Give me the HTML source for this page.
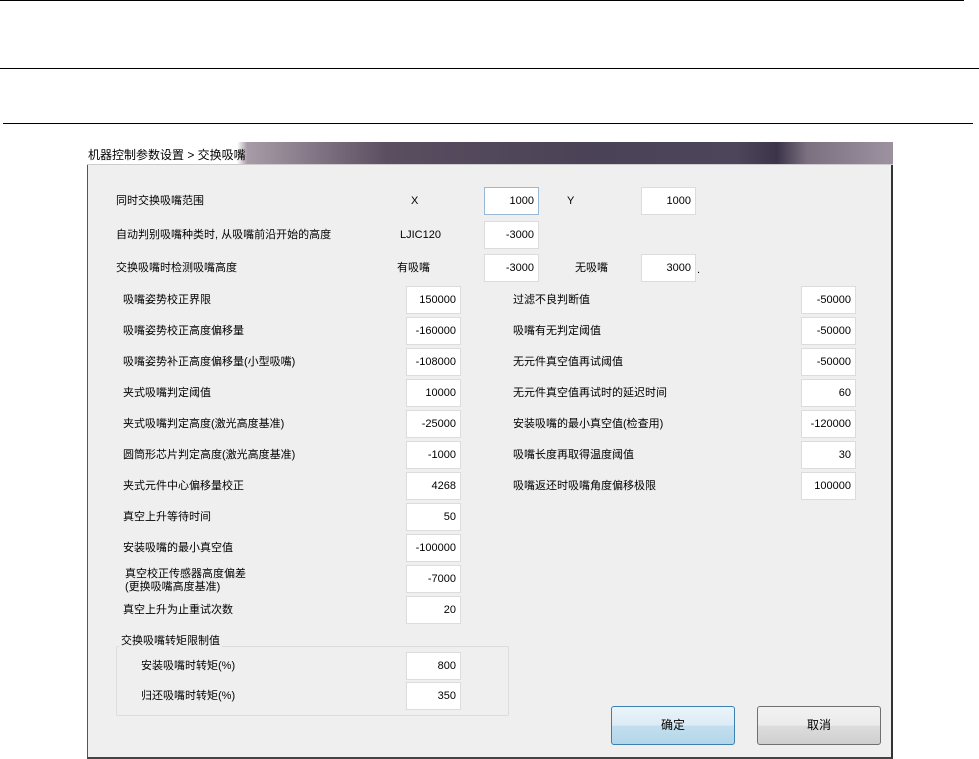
<!DOCTYPE html>
<html><head><meta charset="utf-8"><style>
*{margin:0;padding:0;box-sizing:border-box}
body{width:979px;height:759px;background:#fff;position:relative;overflow:hidden;font-family:"Liberation Sans","Noto Sans CJK SC",sans-serif;font-size:11px;color:#000}
.hl{position:absolute;height:1px;background:#000}
.win{position:absolute;left:87px;top:142px;width:806px;height:617px;background:#efefef;border-left:1px solid #555;border-right:2px solid #333;border-bottom:2px solid #444}
.tb{position:absolute;left:87px;top:142px;width:806px;height:23px;background:linear-gradient(90deg,#fff 0,#fff 150px,#a89ca8 160px,#5a4e60 300px,#4a4256 500px,#4d4559 650px,#3c3448 690px,#7a7080 720px,#9a909e 800px);border-bottom:1px solid #ccc}
.tt{position:absolute;left:88px;top:146px;font-size:12px}
.l{position:absolute;white-space:nowrap;line-height:13px}
.b{position:absolute;width:55px;height:28px;background:#fff;border:1px solid #dcdcdc;text-align:right;padding-right:4px;line-height:26px;font-size:11px}
.gb{position:absolute;left:116px;top:646px;width:393px;height:70px;border:1px solid #dcdcdc;border-radius:2px}
.btn{position:absolute;width:124px;height:39px;text-align:center;line-height:37px;font-size:12px;border-radius:3px}
</style></head><body>
<div class="hl" style="left:0;top:0;width:964px"></div>
<div class="hl" style="left:0;top:68px;width:979px"></div>
<div class="hl" style="left:3px;top:123px;width:970px"></div>
<div class="win"></div>
<div class="tb"></div>
<div class="tt">机器控制参数设置 &gt; 交换吸嘴</div>

<div class="l" style="left:116px;top:195px">同时交换吸嘴范围</div>
<div class="l" style="left:411px;top:195px">X</div>
<div class="b" style="left:484px;top:187px;border-color:#9ab8d8">1000</div>
<div class="l" style="left:567px;top:195px">Y</div>
<div class="b" style="left:641px;top:187px">1000</div>

<div class="l" style="left:116px;top:229px">自动判别吸嘴种类时, 从吸嘴前沿开始的高度</div>
<div class="l" style="left:400px;top:229px">LJIC120</div>
<div class="b" style="left:484px;top:221px">-3000</div>

<div class="l" style="left:116px;top:262px">交换吸嘴时检测吸嘴高度</div>
<div class="l" style="left:397px;top:262px">有吸嘴</div>
<div class="b" style="left:484px;top:254px">-3000</div>
<div class="l" style="left:575px;top:262px">无吸嘴</div>
<div class="b" style="left:641px;top:254px">3000</div>
<div class="l" style="left:697px;top:264px">.</div>

<div class="l" style="left:123px;top:294px">吸嘴姿势校正界限</div><div class="b" style="left:406px;top:286px">150000</div>
<div class="l" style="left:123px;top:325px">吸嘴姿势校正高度偏移量</div><div class="b" style="left:406px;top:317px">-160000</div>
<div class="l" style="left:123px;top:356px">吸嘴姿势补正高度偏移量(小型吸嘴)</div><div class="b" style="left:406px;top:348px">-108000</div>
<div class="l" style="left:123px;top:387px">夹式吸嘴判定阈值</div><div class="b" style="left:406px;top:379px">10000</div>
<div class="l" style="left:123px;top:418px">夹式吸嘴判定高度(激光高度基准)</div><div class="b" style="left:406px;top:410px">-25000</div>
<div class="l" style="left:123px;top:449px">圆筒形芯片判定高度(激光高度基准)</div><div class="b" style="left:406px;top:441px">-1000</div>
<div class="l" style="left:123px;top:480px">夹式元件中心偏移量校正</div><div class="b" style="left:406px;top:472px">4268</div>
<div class="l" style="left:123px;top:511px">真空上升等待时间</div><div class="b" style="left:406px;top:503px">50</div>
<div class="l" style="left:123px;top:542px">安装吸嘴的最小真空值</div><div class="b" style="left:406px;top:534px">-100000</div>
<div class="l" style="left:125px;top:568px">真空校正传感器高度偏差<br>(更换吸嘴高度基准)</div><div class="b" style="left:406px;top:565px">-7000</div>
<div class="l" style="left:123px;top:604px">真空上升为止重试次数</div><div class="b" style="left:406px;top:596px">20</div>

<div class="l" style="left:513px;top:294px">过滤不良判断值</div><div class="b" style="left:801px;top:286px">-50000</div>
<div class="l" style="left:513px;top:325px">吸嘴有无判定阈值</div><div class="b" style="left:801px;top:317px">-50000</div>
<div class="l" style="left:513px;top:356px">无元件真空值再试阈值</div><div class="b" style="left:801px;top:348px">-50000</div>
<div class="l" style="left:513px;top:387px">无元件真空值再试时的延迟时间</div><div class="b" style="left:801px;top:379px">60</div>
<div class="l" style="left:513px;top:418px">安装吸嘴的最小真空值(检查用)</div><div class="b" style="left:801px;top:410px">-120000</div>
<div class="l" style="left:513px;top:449px">吸嘴长度再取得温度阈值</div><div class="b" style="left:801px;top:441px">30</div>
<div class="l" style="left:513px;top:480px">吸嘴返还时吸嘴角度偏移极限</div><div class="b" style="left:801px;top:472px">100000</div>

<div class="gb"></div>
<div class="l" style="left:119px;top:635px;background:#efefef;padding:0 2px">交换吸嘴转矩限制值</div>
<div class="l" style="left:141px;top:660px">安装吸嘴时转矩(%)</div><div class="b" style="left:406px;top:652px">800</div>
<div class="l" style="left:141px;top:690px">归还吸嘴时转矩(%)</div><div class="b" style="left:406px;top:682px">350</div>

<div class="btn" style="left:611px;top:706px;border:1px solid #3c7fb1;background:linear-gradient(#eaf4fa 0,#dcebf5 50%,#c2dfee 51%,#b4d6ea 100%)">确定</div>
<div class="btn" style="left:757px;top:706px;border:1px solid #707070;background:linear-gradient(#f2f2f2 0,#ebebeb 50%,#dddddd 51%,#cfcfcf 100%)">取消</div>
</body></html>
